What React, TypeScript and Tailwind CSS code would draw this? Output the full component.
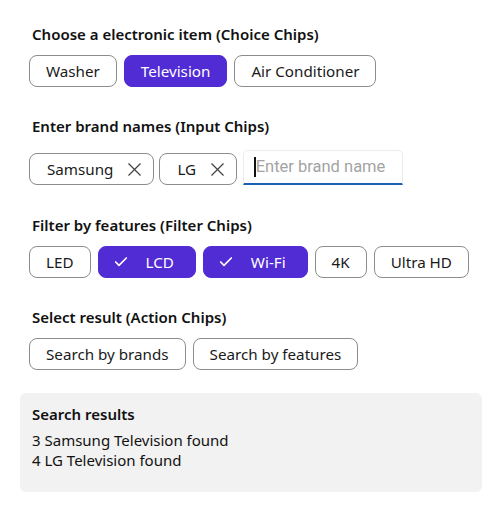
import { Check } from 'lucide-react';

const font = { fontFamily: '"Noto Sans", "Open Sans", sans-serif' };

function Cross() {
  return (
    <svg width="15" height="15" viewBox="0 0 15 15" className="ml-[14px] text-[#444]">
      <path d="M1.5 1.5 L13.5 13.5 M13.5 1.5 L1.5 13.5" stroke="currentColor" strokeWidth="1.3" fill="none" />
    </svg>
  );
}

function Chip({ label, selected, check, close }: { label: string; selected?: boolean; check?: boolean; close?: boolean }) {
  return (
    <div
      className={`h-[32px] flex items-center rounded-[8px] border text-[15.2px] ${
        selected ? 'bg-[#512bd4] border-[#512bd4] text-white' : 'bg-white border-[#8c8c8c] text-[#1a1a1a]'
      } ${check ? 'pl-[14px] pr-[21px]' : close ? 'pl-[17px] pr-[11px]' : 'px-4'}`}
    >
      {check && <Check className="w-4 h-4 mr-[17px]" strokeWidth={2.5} />}
      <span>{label}</span>
      {close && <Cross />}
    </div>
  );
}

function Heading({ children, className = '' }: { children: React.ReactNode; className?: string }) {
  return <div className={`px-[12px] text-[15px] leading-[20px] font-semibold text-[#111] ${className}`}>{children}</div>;
}

export default function App() {
  return (
    <div className="w-[500px] h-[509px] bg-white px-[20px] pt-[24px]" style={font}>
      {/* Choice chips */}
      <Heading>Choose a electronic item (Choice Chips)</Heading>
      <div className="flex gap-[7px] px-[9px] mt-[11px]">
        <Chip label="Washer" />
        <Chip label="Television" selected />
        <Chip label="Air Conditioner" />
      </div>

      {/* Input chips */}
      <Heading className="mt-[29px]">Enter brand names (Input Chips)</Heading>
      <div className="flex items-end gap-[5px] px-[9px] mt-[14px]">
        <Chip label="Samsung" close />
        <Chip label="LG" close />
        <div
          className="w-[160px] h-[35px] ml-[1px] flex items-center rounded-t-[5px] border border-[#ececec] border-b-2 border-b-[#1a5fb4] pl-[10px] text-[16.5px] text-[#a3a3a3]"
          style={{ fontFamily: 'Roboto, sans-serif' }}
        >
          <span className="w-[1.5px] h-[20px] bg-[#111]" />
          Enter brand name
        </div>
      </div>

      {/* Filter chips */}
      <Heading className="mt-[30px]">Filter by features (Filter Chips)</Heading>
      <div className="flex gap-[7px] px-[9px] mt-[11px]">
        <Chip label="LED" />
        <Chip label="LCD" selected check />
        <Chip label="Wi-Fi" selected check />
        <Chip label="4K" />
        <Chip label="Ultra HD" />
      </div>

      {/* Action chips */}
      <Heading className="mt-[29px]">Select result (Action Chips)</Heading>
      <div className="flex gap-[7px] px-[9px] mt-[11px]">
        <Chip label="Search by brands" />
        <Chip label="Search by features" />
      </div>

      {/* Results */}
      <div className="mt-[23px] w-[462px] h-[99px] bg-[#f2f2f2] rounded-[6px] px-[12px] pt-[11px] text-[#111]">
        <div className="text-[15px] leading-[20px] font-semibold">Search results</div>
        <div className="mt-[6px] text-[15px] leading-[20px]">3 Samsung Television found</div>
        <div className="text-[15px] leading-[20px]">4 LG Television found</div>
      </div>
    </div>
  );
}
